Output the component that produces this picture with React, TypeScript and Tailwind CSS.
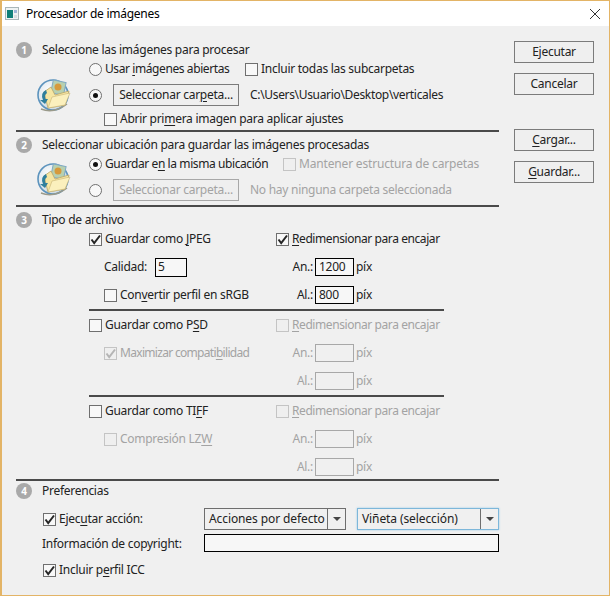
import type React from "react"

const Check = ({ on = false, off = false }: { on?: boolean; off?: boolean }) => (
  <span
    className={`relative block w-[13px] h-[13px] shrink-0 border ${
      off ? "border-[#c4c4c4] bg-[#efefef]" : "border-[#6f6f6f] bg-[#f8f8f8]"
    }`}
  >
    {on && (
      <svg viewBox="0 0 13 13" className="absolute -left-px -top-px w-[13px] h-[13px]">
        <path d="M2.5 6.5 L5.2 10 L11 2.5" fill="none" stroke={off ? "#b5b5b5" : "#262626"} strokeWidth="2" />
      </svg>
    )}
  </span>
)

const Radio = ({ on = false }: { on?: boolean }) => (
  <span className="flex items-center justify-center w-[13px] h-[13px] shrink-0 rounded-full border border-[#6f6f6f] bg-[#f8f8f8]">
    {on && <span className="block w-[5px] h-[5px] rounded-full bg-[#111]" />}
  </span>
)

const Badge = ({ n }: { n: number }) => (
  <span className="flex items-center justify-center w-4 h-4 shrink-0 rounded-full bg-[#a9a9a9] text-white text-[10px] font-bold leading-none">
    {n}
  </span>
)

const Rule = () => <div className="h-[2px] bg-[#4a4a4a]" />

const Btn = ({ children, className = "" }: { children: React.ReactNode; className?: string }) => (
  <div
    className={`flex items-center justify-center h-[22px] border border-[#7b7b7b] bg-[#efefef] text-[#222] ${className}`}
  >
    {children}
  </div>
)

const Mn = ({ children }: { children: React.ReactNode }) => <span className="underline underline-offset-2">{children}</span>

const FolderIcon = () => (
  <svg viewBox="0 0 34 34" className="w-[34px] h-[34px]">
    <defs>
      <radialGradient id="disc" cx="0.4" cy="0.35" r="0.7">
        <stop offset="0" stopColor="#ffffff" />
        <stop offset="1" stopColor="#c9d8e2" />
      </radialGradient>
    </defs>
    <circle cx="16" cy="17" r="15" fill="url(#disc)" stroke="#5c93bd" strokeWidth="1.6" />
    <path d="M4 31 Q17 36 30 26" fill="none" stroke="#9a9a8a" strokeWidth="1.5" />
    <rect x="15" y="3" width="13" height="13" fill="#b7d0b0" stroke="#7fa9c4" transform="rotate(12 21 9)" />
    <circle cx="21" cy="9" r="3.5" fill="#d69a3c" />
    <path d="M7 14 L14 9 L18 17 L32 13 L28 27 L11 30 Z" fill="#f6e6a2" stroke="#b9a566" strokeWidth="0.8" />
    <path d="M11 30 L15 19 L33 15 L28 27 Z" fill="#fbf0bd" stroke="#c7b376" strokeWidth="0.6" />
    <path d="M9 12 Q3 15 6 22 L3 22 L8 26 L11 21 L8.5 21 Q7 17 10 15 Z" fill="#2f7f9c" />
  </svg>
)

const Dim = ({ label, value, off = false }: { label: string; value: string; off?: boolean }) => (
  <div className={`flex items-center h-6 ${off ? "text-[#a3a3a3]" : ""}`}>
    <span className="w-[40px] pr-[2px] text-right">{label}</span>
    <div
      className={`w-[39px] h-[18px] pl-[3px] flex items-center ${
        off ? "border border-[#a8a8a8] bg-[#f0f0f0]" : "border border-black bg-[#f7f7f7]"
      }`}
    >
      {value}
    </div>
    <span className="ml-[2px]">píx</span>
  </div>
)

const FormatBlock = ({
  left,
  sub,
  mid,
  subOn,
  active,
  resize,
  w,
  h,
  last,
}: {
  left: React.ReactNode
  sub?: React.ReactNode
  mid?: React.ReactNode
  subOn?: boolean
  active: boolean
  resize: boolean
  w: string
  h: string
  last?: boolean
}) => (
  <div className="grid grid-cols-[186px_180px] grid-rows-[24px_24px_24px] gap-y-1 pl-[73px]">
    <div className="flex items-center gap-[3px]">
      <Check on={active} />
      <span>{left}</span>
    </div>
    <div className={`flex items-center gap-[3px] pl-px whitespace-nowrap ${active ? "" : "text-[#a3a3a3]"}`}>
      <Check on={resize} off={!active} />
      <span className="tracking-[-0.42px]">
        <Mn>R</Mn>edimensionar para encajar
      </span>
    </div>
    {mid ? (
      <div className="pl-[15px]">{mid}</div>
    ) : (
      <div className="flex items-center gap-[3px] pl-[15px] text-[#a3a3a3]">
        <Check on={subOn} off />
        <span>{sub}</span>
      </div>
    )}
    <Dim label="An.:" value={w} off={!active} />
    <div className={last ? "" : "flex items-center gap-[3px] pl-[15px]"}>
      {active && (
        <>
          <Check />
          <span>
            Con<Mn>v</Mn>ertir perfil en sRGB
          </span>
        </>
      )}
    </div>
    <Dim label="Al.:" value={h} off={!active} />
  </div>
)

const Select = ({ text, focus, className = "" }: { text: string; focus?: boolean; className?: string }) => (
  <div
    className={`flex items-center h-[22px] border ${
      focus ? "border-[#7db7da] shadow-[0_0_2px_#9ccbe6]" : "border-[#6e6e6e]"
    } bg-[#f0f0f0] ${className}`}
  >
    <span className="flex-1 pl-[4px] whitespace-nowrap overflow-hidden tracking-[-0.1px]">{text}</span>
    <span className="flex items-center justify-center w-[18px] h-full border-l border-[#6e6e6e]">
      <span className="block w-0 h-0 border-x-[4px] border-x-transparent border-t-[4px] border-t-[#444]" />
    </span>
  </div>
)

export default function App() {
  return (
    <div
      className="flex flex-col w-[610px] h-[596px] border border-[#e3b466] border-l-2 bg-[#f0f0f0] text-[12px] tracking-[-0.27px] leading-4 text-[#222] overflow-hidden"
      style={{ fontFamily: '"Noto Sans", sans-serif' }}
    >
      {/* Title bar */}
      <div className="flex items-center h-[25px] shrink-0 bg-white pl-[3px] pr-[9px]">
        <svg viewBox="0 0 14 13" className="w-[14px] h-[13px] mr-[7px]">
          <rect x="0.5" y="0.5" width="13" height="12" fill="#eef2f2" stroke="#a9b6b8" />
          <rect x="2" y="3" width="6" height="8" fill="#0f7f78" />
          <rect x="9" y="3" width="3" height="3" fill="#9cb4d6" />
          <rect x="9" y="8" width="3" height="3" fill="#d8dde0" />
        </svg>
        <span className="flex-1 text-black">Procesador de imágenes</span>
        <svg viewBox="0 0 10 10" className="w-[10px] h-[10px]">
          <path d="M0 0 L10 10 M10 0 L0 10" stroke="#333" strokeWidth="1" />
        </svg>
      </div>

      <div className="flex pl-[14px] pt-[13px]">
        {/* Main column */}
        <div className="flex flex-col w-[483px]">
          {/* Step 1 */}
          <div className="flex items-center gap-[10px] h-5 pt-[2px]">
            <Badge n={1} />
            <span>Seleccione las imágenes para procesar</span>
          </div>
          <div className="flex">
            <div className="flex items-center w-[73px] pl-[21px]">
              <FolderIcon />
            </div>
            <div className="flex flex-col">
              <div className="flex items-center h-5">
                <Radio on={false} />
                <span className="ml-[3px] w-[140px] tracking-[-0.41px]">
                  Usar <Mn>i</Mn>mágenes abiertas
                </span>
                <Check />
                <span className="ml-[3px]">Incluir todas las subcarpetas</span>
              </div>
              <div className="flex items-center h-[26px] mt-[3px]">
                <Radio on />
                <Btn className="w-[126px] ml-[11px]">
                  <span>
                    Seleccionar car<Mn>p</Mn>eta...
                  </span>
                </Btn>
                <span className="ml-[11px] whitespace-nowrap tracking-[-0.33px]">C:\Users\Usuario\Desktop\verticales</span>
              </div>
              <div className="flex items-center gap-[3px] h-[22px] pl-[15px]">
                <Check />
                <span>
                  Abrir pri<Mn>m</Mn>era imagen para aplicar ajustes
                </span>
              </div>
            </div>
          </div>
          <Rule />

          {/* Step 2 */}
          <div className="flex items-center gap-[10px] h-5 mt-[2px] pt-[2px]">
            <Badge n={2} />
            <span>Seleccionar ubicación para guardar las imágenes procesadas</span>
          </div>
          <div className="flex">
            <div className="flex items-center w-[73px] pl-[21px]">
              <FolderIcon />
            </div>
            <div className="flex flex-col">
              <div className="flex items-center h-5">
                <Radio on />
                <span className="ml-[3px] w-[178px] tracking-[-0.41px]">
                  Guardar e<Mn>n</Mn> la misma ubicación
                </span>
                <Check off />
                <span className="ml-[3px] text-[#a3a3a3] tracking-[-0.17px]">Mantener estructura de carpetas</span>
              </div>
              <div className="flex items-center h-[26px] mt-[3px] text-[#a3a3a3]">
                <Radio />
                <Btn className="w-[126px] ml-[11px] !border-[#a8a8a8] !text-[#a3a3a3]">Seleccionar carpeta...</Btn>
                <span className="ml-[11px] whitespace-nowrap">No hay ninguna carpeta seleccionada</span>
              </div>
            </div>
          </div>
          <div className="mt-[2px]">
            <Rule />
          </div>

          {/* Step 3 */}
          <div className="flex items-center gap-[10px] h-[14px] mt-[6px]">
            <Badge n={3} />
            <span>Tipo de archivo</span>
          </div>
          <FormatBlock
            active
            resize
            w="1200"
            h="800"
            left={
              <>
                Guardar como <Mn>J</Mn>PEG
              </>
            }
            mid={
              <div className="flex items-center h-6">
                <span className="w-[51px]">Calidad:</span>
                <div className="flex items-center w-[32px] h-[19px] pl-[2px] border border-black bg-[#f7f7f7]">5</div>
              </div>
            }
          />
          <div className="ml-[73px] mr-[55px] mt-[2px]">
            <div className="h-[2px] bg-[#4a4a4a]" />
          </div>
          <div className="mt-[2px]">
            <FormatBlock
              active={false}
              resize={false}
              w=""
              h=""
              last
              subOn
              left={
                <>
                  Guardar como P<Mn>S</Mn>D
                </>
              }
              sub={
                <span className="tracking-[-0.69px]">
                  Maximizar compati<Mn>b</Mn>ilidad
                </span>
              }
            />
          </div>
          <div className="ml-[73px] mr-[55px] mt-[2px]">
            <div className="h-[2px] bg-[#4a4a4a]" />
          </div>
          <div className="mt-[2px]">
            <FormatBlock
              active={false}
              resize={false}
              w=""
              h=""
              last
              left={
                <>
                  Guardar como TI<Mn>F</Mn>F
                </>
              }
              sub={
                <>
                  Compresión LZ<Mn>W</Mn>
                </>
              }
            />
          </div>
          <Rule />

          {/* Step 4 */}
          <div className="flex items-center gap-[10px] h-4 mt-[2px]">
            <Badge n={4} />
            <span>Preferencias</span>
          </div>
          <div className="flex items-center mt-[9px] pl-[27px]">
            <div className="flex items-center gap-[3px] w-[161px]">
              <Check on />
              <span>
                Ejec<Mn>u</Mn>tar acción:
              </span>
            </div>
            <Select text="Acciones por defecto" className="w-[142px]" />
            <Select text="Viñeta (selección)" focus className="w-[142px] ml-[11px]" />
          </div>
          <div className="flex items-center mt-1 pl-[26px]">
            <span className="w-[162px] pt-[2px]">Información de copyright:</span>
            <div className="w-[295px] h-[18px] border border-black bg-[#f7f7f7]" />
          </div>
          <div className="flex items-center gap-[3px] mt-[8px] h-5 pl-[27px]">
            <Check on />
            <span>
              Incluir p<Mn>e</Mn>rfil ICC
            </span>
          </div>
        </div>

        {/* Button column */}
        <div className="flex flex-col ml-[15px] w-[80px] pt-[2px]">
          <Btn>Ejecutar</Btn>
          <Btn className="mt-[10px]">Cancelar</Btn>
          <Btn className="mt-[34px]">
            <span>
              <Mn>C</Mn>argar...
            </span>
          </Btn>
          <Btn className="mt-[10px]">
            <span>
              <Mn>G</Mn>uardar...
            </span>
          </Btn>
        </div>
      </div>
    </div>
  )
}
